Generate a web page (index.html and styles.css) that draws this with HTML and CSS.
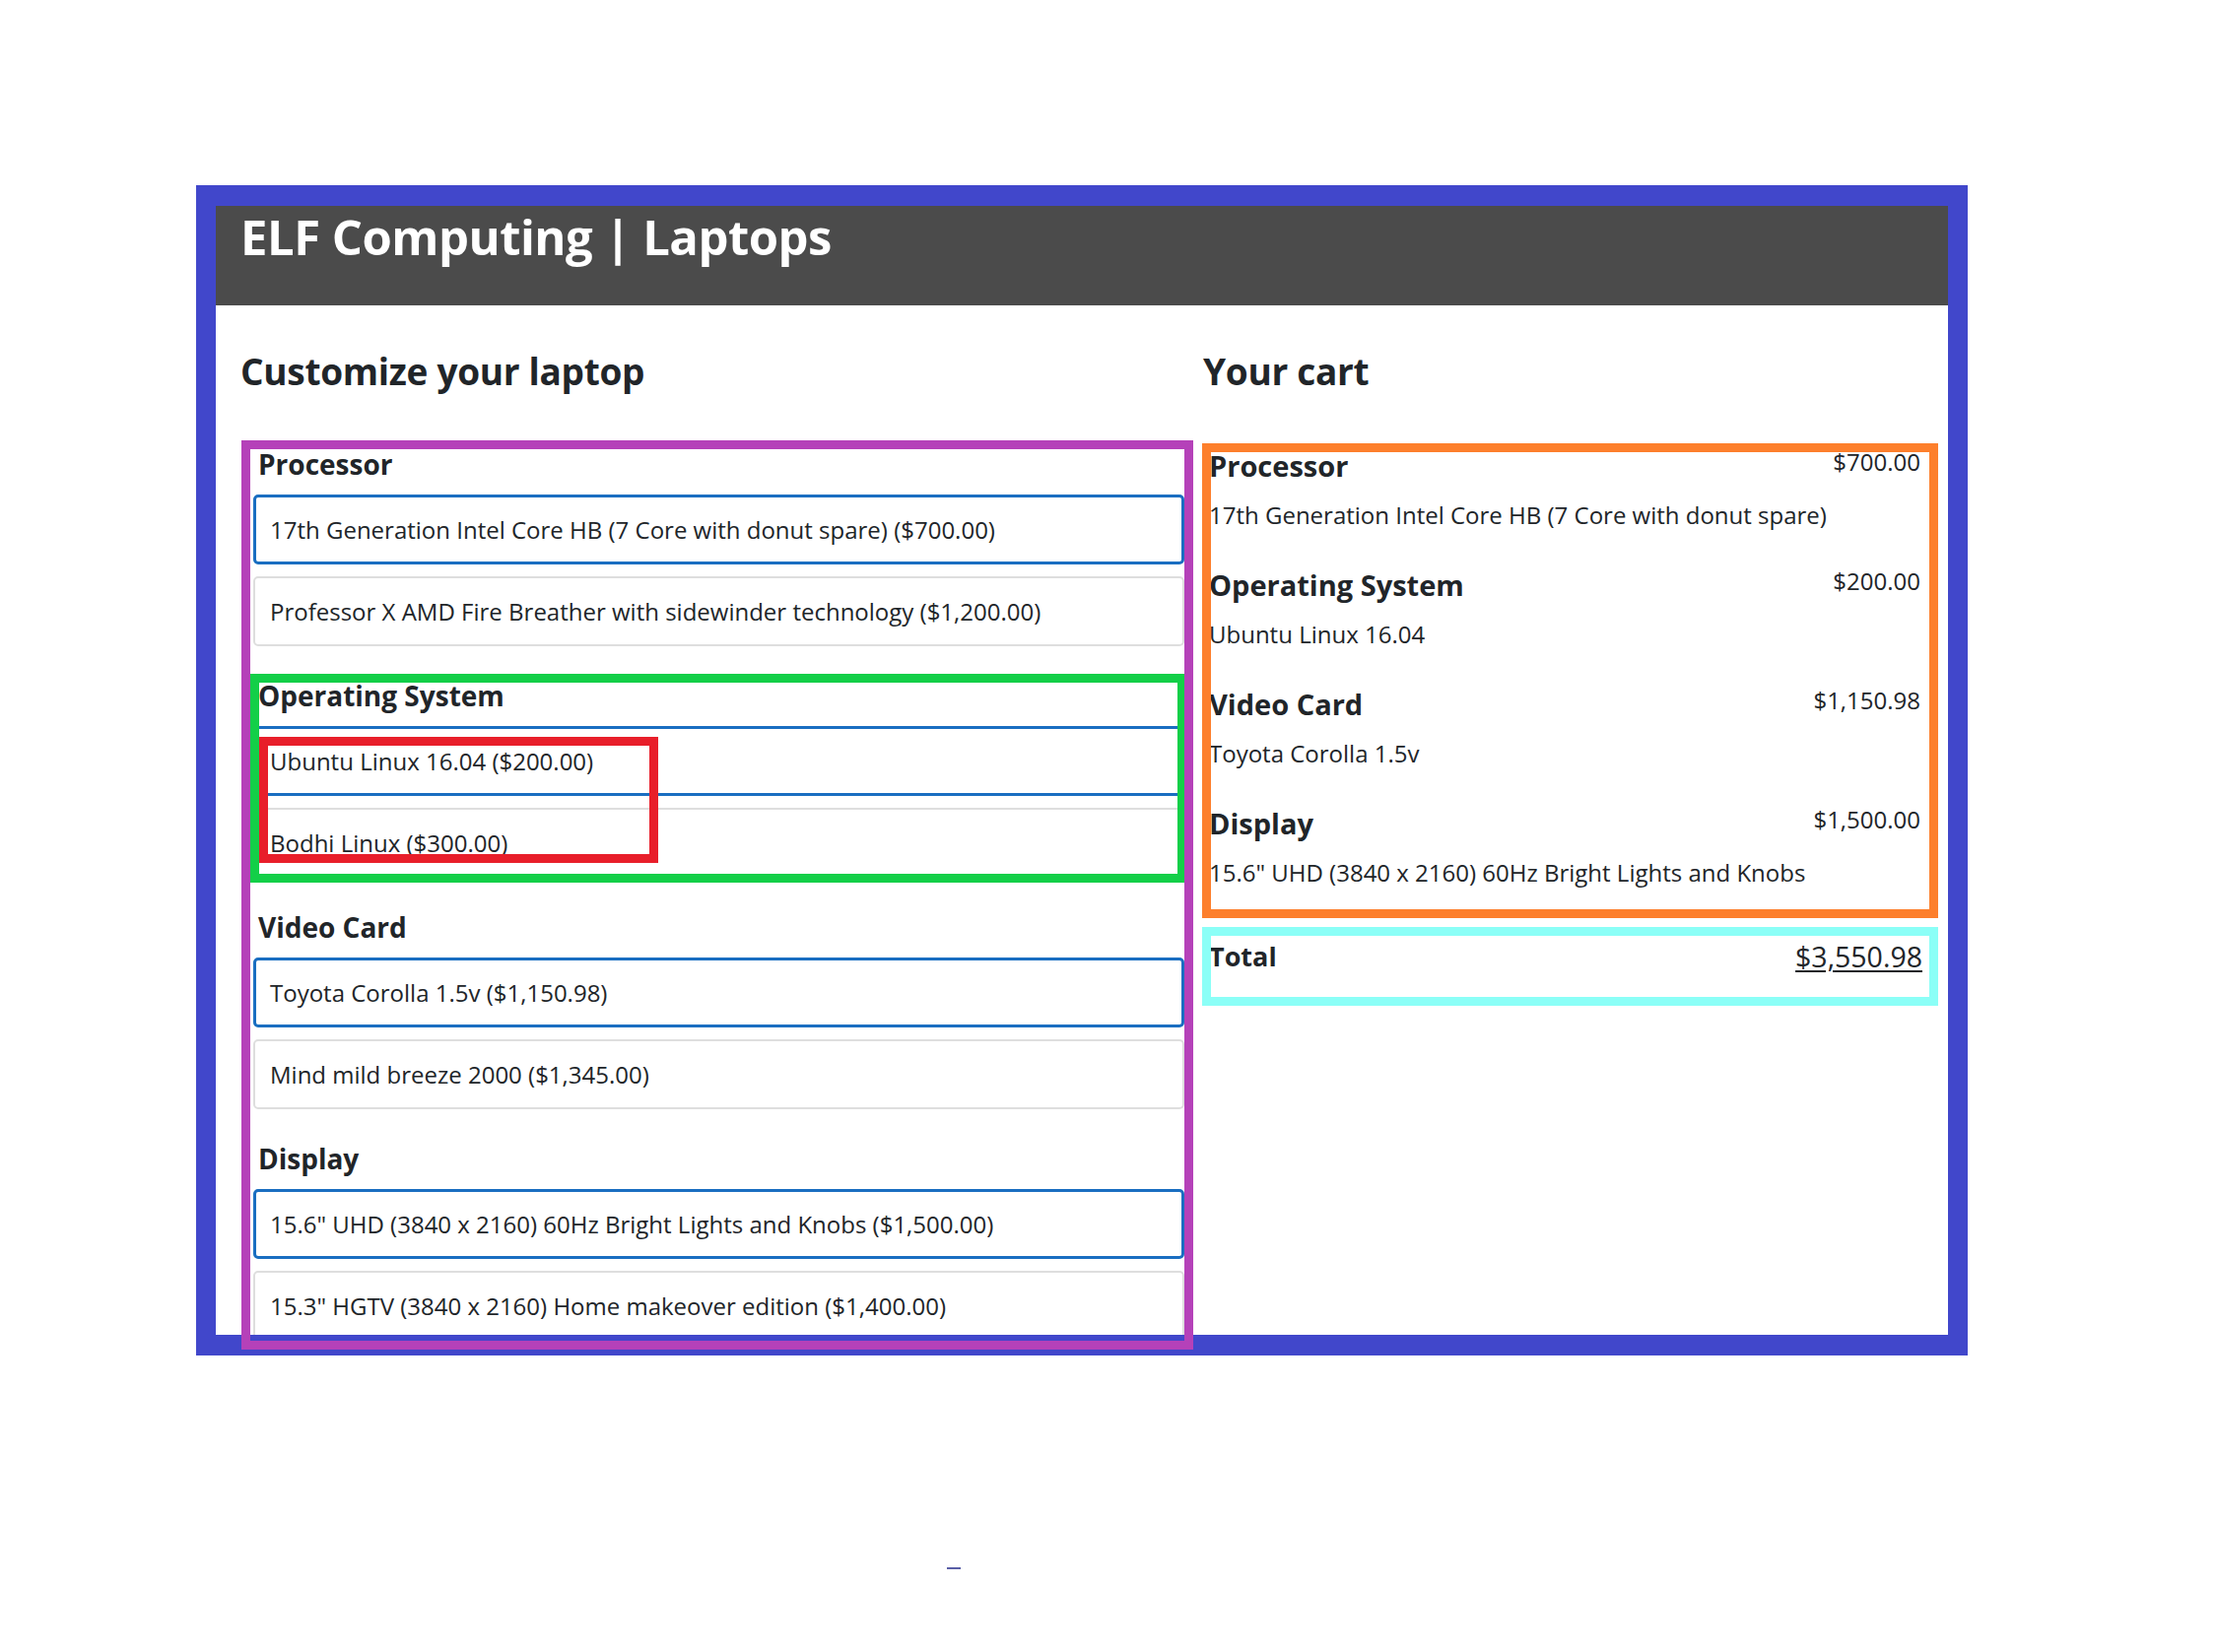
FILE: index.html
```html
<!DOCTYPE html>
<html lang="en">
<head>
<meta charset="utf-8">
<title>ELF Computing | Laptops</title>
<link rel="stylesheet" href="styles.css">
</head>
<body>
<div class="app">
  <header class="header">
    <h1 class="title">ELF Computing | Laptops</h1>
  </header>
  <main class="main">
    <section class="col-left">
      <h2 class="col-title">Customize your laptop</h2>
      <form class="features">
        <fieldset class="feature">
          <legend class="feature-name">Processor</legend>
          <div class="option selected">17th Generation Intel Core HB (7 Core with donut spare) ($700.00)</div>
          <div class="option">Professor X AMD Fire Breather with sidewinder technology ($1,200.00)</div>
        </fieldset>
        <fieldset class="feature feature-os">
          <legend class="feature-name">Operating System</legend>
          <div class="option selected">Ubuntu Linux 16.04 ($200.00)</div>
          <div class="option">Bodhi Linux ($300.00)</div>
          <div class="mark-red"></div>
        </fieldset>
        <fieldset class="feature">
          <legend class="feature-name">Video Card</legend>
          <div class="option selected">Toyota Corolla 1.5v ($1,150.98)</div>
          <div class="option">Mind mild breeze 2000 ($1,345.00)</div>
        </fieldset>
        <fieldset class="feature">
          <legend class="feature-name">Display</legend>
          <div class="option selected">15.6" UHD (3840 x 2160) 60Hz Bright Lights and Knobs ($1,500.00)</div>
          <div class="option">15.3" HGTV (3840 x 2160) Home makeover edition ($1,400.00)</div>
        </fieldset>
      </form>
    </section>
    <section class="col-right">
      <h2 class="col-title">Your cart</h2>
      <div class="cart">
        <div class="cart-item">
          <div class="cart-row"><h3 class="cart-name">Processor</h3><span class="cart-price">$700.00</span></div>
          <p class="cart-desc">17th Generation Intel Core HB (7 Core with donut spare)</p>
        </div>
        <div class="cart-item">
          <div class="cart-row"><h3 class="cart-name">Operating System</h3><span class="cart-price">$200.00</span></div>
          <p class="cart-desc">Ubuntu Linux 16.04</p>
        </div>
        <div class="cart-item">
          <div class="cart-row"><h3 class="cart-name">Video Card</h3><span class="cart-price">$1,150.98</span></div>
          <p class="cart-desc">Toyota Corolla 1.5v</p>
        </div>
        <div class="cart-item">
          <div class="cart-row"><h3 class="cart-name">Display</h3><span class="cart-price">$1,500.00</span></div>
          <p class="cart-desc">15.6" UHD (3840 x 2160) 60Hz Bright Lights and Knobs</p>
        </div>
      </div>
      <div class="total">
        <span class="total-label">Total</span>
        <span class="total-value">$3,550.98</span>
      </div>
    </section>
  </main>
</div>
<div class="dash"></div>
</body>
</html>
```
FILE: styles.css
```css
html, body {
  margin: 0;
  padding: 0;
  background: #ffffff;
}

body {
  font-family: "Open Sans", "Noto Sans", "Liberation Sans", sans-serif;
  color: #212529;
}

.app {
  position: relative;
  margin: 209px 0 0 219px;
  width: 1758px;
  height: 1146px;
  background: #ffffff;
}

/* blue frame drawn over the app */
.app::after {
  content: "";
  position: absolute;
  top: -21px;
  left: -20px;
  right: -20px;
  bottom: -21px;
  border: 20px solid #4147cb;
  border-top-width: 21px;
  border-bottom-width: 21px;
  z-index: 1;
  pointer-events: none;
}

.header {
  height: 101px;
  background: #4b4b4b;
  padding: 0 25px;
  box-sizing: border-box;
}

.title {
  margin: 0;
  padding-top: 1px;
  font-size: 49px;
  line-height: 60px;
  font-weight: 700;
  color: #ffffff;
  letter-spacing: -0.5px;
}

.main {
  display: grid;
  grid-template-columns: 958px 739px;
  column-gap: 19px;
  padding: 0 17px 0 25px;
}

.col-title {
  margin: 0;
  padding-top: 43px;
  height: 106px;
  box-sizing: border-box;
  font-size: 37px;
  line-height: 48px;
  font-weight: 700;
  letter-spacing: -0.3px;
}

/* left column */
.features {
  position: relative;
  margin: 40px 0 0 10px;
}

.features::after {
  content: "";
  position: absolute;
  top: -9px;
  left: -9px;
  right: -9px;
  bottom: -9px;
  border: 9px solid #b541b9;
  z-index: 2;
  pointer-events: none;
}

.feature {
  position: relative;
  border: 0;
  margin: 0 0 35px 0;
  padding: 30px 0 0 3px;
  min-width: 0;
}

.feature:last-child {
  margin-bottom: 0;
}

.feature-name {
  position: absolute;
  top: 0;
  left: 8px;
  padding: 0;
  font-size: 28px;
  line-height: 30px;
  font-weight: 700;
}

.option {
  box-sizing: border-box;
  height: 71px;
  margin-top: 12px;
  padding: 0 15px;
  border: 2px solid #dedede;
  border-radius: 5px;
  font-size: 24px;
  line-height: 67px;
  white-space: nowrap;
}

.feature-name + .option,
.option:first-of-type {
  margin-top: 16px;
}

.option.selected {
  border: 3px solid #1a6ec1;
  line-height: 65px;
  padding: 0 14px;
}

.feature-os::after {
  content: "";
  position: absolute;
  top: -7px;
  left: 0;
  right: -2px;
  bottom: -5px;
  border: 9px solid #13cf48;
  z-index: 2;
  pointer-events: none;
}

.mark-red {
  position: absolute;
  top: 57px;
  left: 9px;
  width: 405px;
  height: 128px;
  box-sizing: border-box;
  border: 9px solid #e81e2a;
  z-index: 3;
  pointer-events: none;
}

/* right column */
.cart {
  position: relative;
  margin: 40px 0 0 6px;
  padding: 0 11px 23px 0;
}

.cart::after {
  content: "";
  position: absolute;
  top: -6px;
  left: -7px;
  right: -7px;
  bottom: -8px;
  border: 9px solid #fd7f2c;
  z-index: 2;
  pointer-events: none;
}

.cart-item {
  margin-bottom: 39px;
}

.cart-item:last-child {
  margin-bottom: 0;
}

.cart-row {
  display: flex;
  justify-content: space-between;
  align-items: flex-start;
}

.cart-name {
  margin: 0;
  font-size: 29px;
  line-height: 34px;
  font-weight: 700;
}

.cart-price {
  font-size: 24px;
  line-height: 26px;
}

.cart-desc {
  margin: 18px 0 0 0;
  font-size: 24px;
  line-height: 30px;
}

.total {
  position: relative;
  display: flex;
  justify-content: space-between;
  align-items: flex-start;
  margin: 23px 0 0 6px;
  padding: 7px 9px 0 0;
  height: 67px;
  box-sizing: border-box;
}

.total::after {
  content: "";
  position: absolute;
  top: -6px;
  left: -7px;
  right: -7px;
  bottom: -7px;
  border: 9px solid #8bfff7;
  z-index: 2;
  pointer-events: none;
}

.total-label {
  font-size: 27px;
  line-height: 34px;
  font-weight: 700;
}

.total-value {
  font-size: 28.5px;
  line-height: 34px;
  text-decoration: underline;
  text-underline-offset: 3px;
}

.dash {
  width: 14px;
  height: 2px;
  margin: 236px 0 0 961px;
  background: #5a5fa6;
}
```
